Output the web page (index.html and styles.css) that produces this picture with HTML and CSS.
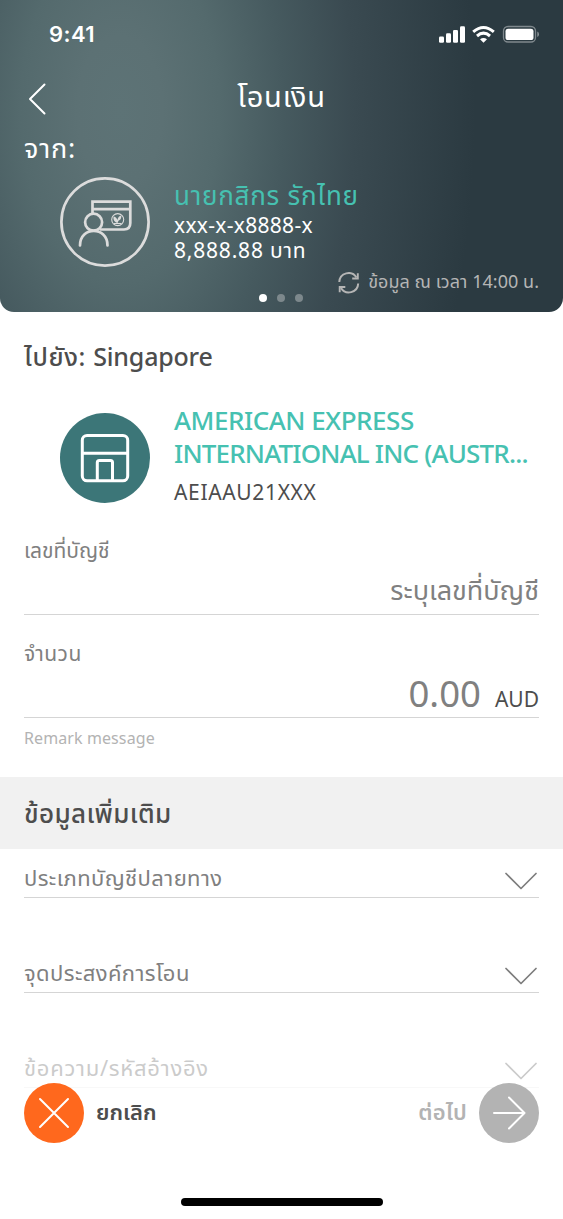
FILE: index.html
```html
<!DOCTYPE html>
<html lang="th">
<head>
<meta charset="utf-8">
<title>โอนเงิน</title>
<link rel="stylesheet" href="styles.css">
</head>
<body>
<main class="screen">
  <header class="hero">
    <div class="status">
      <span class="clock">9:41</span>
      <svg class="status-icons" width="102" height="20" viewBox="0 0 102 20" fill="#fff">
        <rect x="1" y="12.500" width="5" height="6.300" rx="1.300"/><rect x="8" y="9.300" width="5" height="9.500" rx="1.300"/><rect x="15" y="6" width="5" height="12.800" rx="1.300"/><rect x="22" y="2.300" width="5" height="16.500" rx="1.300"/>
        <g fill="none" stroke="#fff" stroke-width="3"><path d="M35.200 7.800Q45.500 -.8 55.800 7.800"/><path d="M39 12Q45.500 6.300 52 12"/></g>
        <path d="M42 15.200Q45.500 12.600 49 15.200L45.500 18.700Z"/>
        <rect x="65.500" y="2.500" width="32" height="15.500" rx="4.500" fill="none" stroke="#fff" stroke-opacity=".4" stroke-width="1.300"/>
        <rect x="67.500" y="4.700" width="28" height="11.300" rx="2.600"/><path d="M99.300 7.500Q101 8.200 101 10.200T99.300 13Z" opacity=".45"/>
      </svg>
    </div>
    <div class="titlebar">
      <svg width="20" height="34" viewBox="0 0 20 34" fill="none" stroke="#fff" stroke-width="2" stroke-linecap="round" stroke-linejoin="round"><path d="M16.500 2.500L2 17L16.500 31.500"/></svg>
      <h1 class="title"><span class="t">โอนเงิน</span></h1>
    </div>
    <div class="from"><span class="t">จาก:</span></div>
    <div class="account">
      <svg width="90" height="90" viewBox="0 0 90 90" fill="none" stroke="#dcdcdc" stroke-width="2.700">
        <circle cx="45" cy="45" r="43.600"/>
        <path d="M32.500 37V24.600H70.300V46Q70.300 52.500 64 52.500H40M32.500 32.200H70.300"/>
        <circle cx="33.600" cy="45.200" r="8.500"/><path d="M20 68.500C20 49 47.500 49 47.500 68.500" stroke-linecap="round"/>
        <g stroke-width="1.100"><circle cx="57.700" cy="42.600" r="6"/><path d="M54 46.500H61.500"/></g>
        <path d="M57.500 46C53.500 45 53 41 53.700 39.500C56 40 57 41.500 57.500 43C58 40.500 59 39 61.300 38.500C61.500 42 60 43 58.500 43.700Z" fill="#dcdcdc" stroke="none"/>
      </svg>
      <div class="account-text">
        <div class="name"><span class="t">นายกสิกร รักไทย</span></div>
        <div class="number"><span class="t">xxx-x-x8888-x</span></div>
        <div class="number balance"><span class="t">8,888.88 บาท</span></div>
      </div>
    </div>
    <div class="updated">
      <svg width="22" height="22" viewBox="0 0 22 22" fill="none" stroke="#b5b5b5" stroke-width="2"><path d="M1.300 10A9.300 9.300 0 0 1 18.500 5.500M20.200 11.500A9.300 9.300 0 0 1 3 16"/><path d="M19.800 1.300V6.500H14.200M1.700 20.200V15H7.300" stroke-width="1.900"/></svg>
      <span class="t">ข้อมูล ณ เวลา 14:00 น.</span>
    </div>
    <div class="dots"><i class="dot on"></i><i class="dot"></i><i class="dot"></i></div>
  </header>

  <section class="to">
    <h2 class="to-title"><span class="t">ไปยัง: <span class="country">Singapore</span></span></h2>
    <div class="bank">
      <svg width="90" height="90" viewBox="0 0 90 90" fill="none" stroke="#fff" stroke-width="3"><circle cx="45" cy="45" r="45" fill="#3c7678" stroke="none"/><rect x="22.300" y="22.400" width="45.400" height="45.400" rx="4.800"/><path d="M22 40.300H68M37.300 67V49.500Q37.300 47.500 39.300 47.500H50.500Q52.500 47.500 52.500 49.500V67"/></svg>
      <div class="bank-text">
        <div class="bank-name"><span class="t b1">AMERICAN EXPRESS</span></div>
        <div class="bank-name"><span class="t b2">INTERNATIONAL INC (AUSTR...</span></div>
        <div class="swift"><span class="t">AEIAAU21XXX</span></div>
      </div>
    </div>
  </section>

  <section class="form">
    <div class="field">
      <div class="label"><span class="t l1">เลขที่บัญชี</span></div>
      <div class="placeholder"><span class="t">ระบุเลขที่บัญชี</span></div>
    </div>
    <div class="field amount-field">
      <div class="label"><span class="t l2">จำนวน</span></div>
      <div class="amount"><span class="t zero">0.00</span><span class="t currency">AUD</span></div>
    </div>
    <div class="remark"><span class="t">Remark message</span></div>
  </section>

  <h2 class="band"><span class="t">ข้อมูลเพิ่มเติม</span></h2>

  <section class="selects">
    <div class="select"><span class="t s1">ประเภทบัญชีปลายทาง</span><svg class="chev" width="36" height="20" viewBox="0 0 36 20"><path d="M3 2.500L18 17.500L33 2.500"/></svg></div>
    <div class="select"><span class="t s2">จุดประสงค์การโอน</span><svg class="chev" width="36" height="20" viewBox="0 0 36 20"><path d="M3 2.500L18 17.500L33 2.500"/></svg></div>
    <div class="select faded"><span class="t s3">ข้อความ/รหัสอ้างอิง</span><svg class="chev" width="36" height="20" viewBox="0 0 36 20"><path d="M3 2.500L18 17.500L33 2.500"/></svg></div>
  </section>

  <footer class="actions">
    <svg width="60" height="60" viewBox="0 0 60 60" fill="none" stroke="#fff" stroke-width="2" stroke-linecap="round"><circle cx="30" cy="30" r="30" fill="#ff681d" stroke="none"/><path d="M16 16L44 44M44 16L16 44"/></svg>
    <span class="action cancel"><span class="t">ยกเลิก</span></span>
    <span class="action next"><span class="t">ต่อไป</span></span>
    <svg width="60" height="60" viewBox="0 0 60 60" fill="none" stroke="#fff" stroke-width="2" stroke-linecap="round" stroke-linejoin="round"><circle cx="30" cy="30" r="30" fill="#b3b3b3" stroke="none"/><path d="M15 30H45M30 14.500L45.500 30L30 45.500"/></svg>
  </footer>
  <div class="home"></div>
</main>
</body>
</html>
```
FILE: styles.css
```css
* { box-sizing: border-box; }
body { margin: 0; background: #fff; font-family: "Noto Sans", "Noto Sans Thai", "Open Sans", sans-serif; color: #4d4d4d; }
.screen { width: 563px; height: 1219px; overflow: hidden; }
h1, h2 { margin: 0; font-weight: 400; }
svg { display: block; flex: none; }
.t { display: inline-block; white-space: pre; }

.hero { height: 312px; border-radius: 0 0 14px 14px; color: #fff; background: radial-gradient(ellipse 355px 620px at 120px 110px, #5d7376 0%, #5c7174 12%, #546a6d 28%, #465a5f 46%, #3a4a51 66%, #2b3a41 100%); }
.status { display: flex; justify-content: space-between; height: 68px; padding: 24px 23px 0 49px; }
.clock { font: 600 22px/20px Inter, sans-serif; letter-spacing: .4px; }
.titlebar { display: flex; height: 64px; padding: 14px 28px 0; }
.title { flex: 1; margin: -2px 20px 0 0; text-align: center; font-size: 29px; line-height: 32px; letter-spacing: .8px; }
.from { height: 45px; padding-left: 24px; font-size: 27px; line-height: 31px; letter-spacing: .8px; }
.account { display: flex; gap: 24px; height: 95px; padding-left: 60px; }
.name { font-size: 26px; line-height: 37px; letter-spacing: .75px; color: #46c1b1; }
.number { margin-top: -1px; font-size: 21px; line-height: 25px; letter-spacing: .3px; }
.balance { margin-top: 0; letter-spacing: .8px; }
.updated { display: flex; justify-content: flex-end; gap: 8px; height: 22px; padding-right: 24px; font-size: 18px; line-height: 19px; letter-spacing: .04px; color: #b5b5b5; }
.dots { display: flex; justify-content: center; gap: 10px; margin-right: 1px; }
.dot { width: 8px; height: 8px; border-radius: 50%; background: #7d888c; }
.dot.on { background: #fff; }

.to { height: 222px; padding: 29px 24px 0; }
.to-title { font-size: 25px; line-height: 30px; font-weight: 500; letter-spacing: .7px; }
.country { letter-spacing: -.2px; }
.bank { display: flex; gap: 24px; margin-top: 41.500px; padding-left: 36px; }
.bank-text { margin-top: -9px; }
.bank-name { font-size: 26px; line-height: 33px; font-weight: 500; color: #46c1b1; }
.b1 { letter-spacing: -.47px; }
.b2 { letter-spacing: -.82px; }
.swift { margin-top: 8px; font-size: 21px; line-height: 28px; letter-spacing: .65px; }

.form { padding: 0 24px; height: 243px; }
.field { height: 81px; border-bottom: 1px solid #d5d5d5; color: #808080; }
.amount-field { height: 103px; padding-top: 22px; }
.label { height: 32px; font-size: 21px; line-height: 32px; }
.l2 { letter-spacing: .5px; }
.placeholder { text-align: right; font-size: 27px; line-height: 48px; }
.amount { display: flex; justify-content: flex-end; align-items: baseline; gap: 14px; line-height: 48px; }
.zero { font-size: 36.500px; }
.currency { font-size: 21px; color: #4d4d4d; }
.remark { color: #b3b3b3; font-size: 16px; line-height: 40px; letter-spacing: .1px; }
.band { height: 72px; padding-left: 24px; background: #f1f1f1; font-size: 26px; line-height: 72px; font-weight: 500; letter-spacing: .4px; }

.selects { padding: 0 24px; height: 234px; }
.select { display: flex; align-items: center; justify-content: space-between; height: 49px; margin-bottom: 46px; padding-top: 8px; border-bottom: 1px solid #d5d5d5; color: #808080; font-size: 22px; line-height: 36px; letter-spacing: .4px; }
.s3 { letter-spacing: .75px; }
.chev { fill: none; stroke: #7d7d7d; stroke-width: 1.7; stroke-linecap: round; stroke-linejoin: round; margin-top: 7px; }
.faded { opacity: .4; border-color: #eee; }

.actions { position: relative; display: flex; align-items: center; height: 60px; padding: 0 24px; }
.action { margin-top: -4px; font-size: 22px; line-height: 56px; font-weight: 600; }
.cancel { margin-left: 12px; }
.next { margin-left: auto; margin-right: 12px; color: #b3b3b3; letter-spacing: .2px; }
.home { width: 202px; height: 8px; border-radius: 4px; margin: 55px auto 0; background: #000; }
```
